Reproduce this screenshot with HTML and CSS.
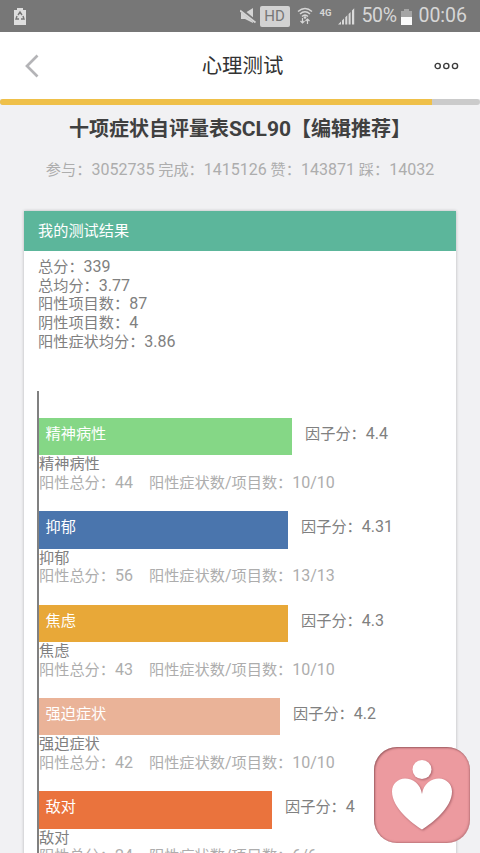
FILE: index.html
```html
<!DOCTYPE html>
<html lang="zh-CN">
<head>
<meta charset="utf-8">
<title>心理测试</title>
<link rel="stylesheet" href="styles.css">
</head>
<body>
<div class="status">
  <svg class="recycle" width="12" height="17" viewBox="0 0 12 17"><path d="M0 2h3V0h6v2h3v15H0z" fill="#dedede"/><path d="M4 7l2-3 2 3M9 8l1 3H7M5 11H2l1-3" fill="none" stroke="#777" stroke-width="1.4"/></svg>
  <svg class="mute" width="17" height="17" viewBox="0 0 17 17"><path d="M1 5h4l8-5v15l-8-4H1z" fill="#d4d4d4"/><path d="M0 1l16 13" stroke="#777" stroke-width="3.5"/><path d="M0 2.5l15.500 12" stroke="#d4d4d4" stroke-width="1.8"/></svg>
  <span class="hd">HD</span>
  <svg class="wifi" width="16" height="18" viewBox="0 0 16 18"><g fill="none" stroke="#d6d6d6" stroke-width="1.5"><path d="M1 4.500Q8-1.500 15 4.500M3 7Q8 2.500 13 7M5 9.500Q8 6.800 11 9.500"/></g><circle cx="8" cy="10.500" r="1.300" fill="#d6d6d6"/><path d="M5.500 11v5M3.500 14l2 2 2-2M10.500 17v-5M8.500 14l2-2 2 2" fill="none" stroke="#d6d6d6" stroke-width="1.200"/></svg>
  <span class="net">4G</span>
  <svg class="signal" width="17" height="17" viewBox="0 0 17 17"><path d="M0 16.500l3-3v3zM4 12.500l2-2v6H4zM7.300 9.200l2-2v9.300h-2zM10.600 5.900l2-2v12.600h-2zM14 2.500l2.200-2.200v16.200H14z" fill="#dadada"/></svg>
  <span class="pct">50%</span>
  <svg class="battery" width="11" height="16" viewBox="0 0 11 16"><path d="M0 2h3V0h5v2h3v6H0z" fill="#a5a5a5"/><path d="M0 8h11v8H0z" fill="#fafafa"/></svg>
  <span class="clock">00:06</span>
</div>
<header class="nav">
  <svg width="14" height="24" viewBox="0 0 14 24"><path d="M12.500 1.500L2 12l10.500 10.500" fill="none" stroke="#b4b4b7" stroke-width="2.700"/></svg>
  <h1>心理测试</h1>
  <svg width="25" height="8" viewBox="0 0 25 8"><g fill="none" stroke="#3c3c3c" stroke-width="1.400"><circle cx="3.700" cy="4" r="2.600"/><circle cx="12.300" cy="4" r="2.600"/><circle cx="21" cy="4" r="2.600"/></g></svg>
</header>
<div class="progress"><div class="done"></div></div>
<main>
  <h2>十项症状自评量表<span class="en">SCL90</span>【编辑推荐】</h2>
  <p class="stats">参与<i>：</i><b>3052735</b> 完成<i>：</i><b>1415126</b> 赞<i>：</i><b>143871</b> 踩<i>：</i><b>14032</b></p>
  <section class="card">
    <h3>我的测试结果</h3>
    <div class="summary">
      <p>总分<i>：</i><b>339</b></p>
      <p>总均分<i>：</i><b>3.77</b></p>
      <p>阳性项目数<i>：</i><b>87</b></p>
      <p>阴性项目数<i>：</i><b>4</b></p>
      <p>阳性症状均分<i>：</i><b>3.86</b></p>
    </div>
    <div class="chart">
      <div class="item">
        <div class="row"><div class="bar green" style="width:253px">精神病性</div><span>因子分<i>：</i><b>4.4</b></span></div>
        <p>精神病性</p>
        <p class="detail"><span>阳性总分<i>：</i><b>44</b></span><span>阳性症状数<b>/</b>项目数<i>：</i><b>10/10</b></span></p>
      </div>
      <div class="item">
        <div class="row"><div class="bar blue" style="width:249px">抑郁</div><span>因子分<i>：</i><b>4.31</b></span></div>
        <p>抑郁</p>
        <p class="detail"><span>阳性总分<i>：</i><b>56</b></span><span>阳性症状数<b>/</b>项目数<i>：</i><b>13/13</b></span></p>
      </div>
      <div class="item">
        <div class="row"><div class="bar amber" style="width:249px">焦虑</div><span>因子分<i>：</i><b>4.3</b></span></div>
        <p>焦虑</p>
        <p class="detail"><span>阳性总分<i>：</i><b>43</b></span><span>阳性症状数<b>/</b>项目数<i>：</i><b>10/10</b></span></p>
      </div>
      <div class="item">
        <div class="row"><div class="bar peach" style="width:241px">强迫症状</div><span>因子分<i>：</i><b>4.2</b></span></div>
        <p>强迫症状</p>
        <p class="detail"><span>阳性总分<i>：</i><b>42</b></span><span>阳性症状数<b>/</b>项目数<i>：</i><b>10/10</b></span></p>
      </div>
      <div class="item">
        <div class="row"><div class="bar orange" style="width:233px">敌对</div><span>因子分<i>：</i><b>4</b></span></div>
        <p>敌对</p>
        <p class="detail"><span>阳性总分<i>：</i><b>24</b></span><span>阳性症状数<b>/</b>项目数<i>：</i><b>6/6</b></span></p>
      </div>
    </div>
  </section>
</main>
<div class="float">
  <svg width="96" height="96" viewBox="0 0 96 96"><g fill="#fff"><circle cx="48" cy="22.500" r="9.500"/><path d="M48 82.500C38 76 18 61 18 44.500C18 37 24 31.500 31 31.500C39 31.500 46.500 37 48 47C49.500 37 57 31.500 65 31.500C72 31.500 78 37 78 44.500C78 61 58 76 48 82.500Z"/></g></svg>
</div>
</body>
</html>
```
FILE: styles.css
```css
* { box-sizing: border-box; margin: 0; padding: 0; }
body {
  height: 853px;
  overflow: hidden;
  display: flex;
  flex-direction: column;
  background: #f1f1f3;
  color: #808080;
  font: 15.2px/18.67px Roboto, "Noto Sans CJK SC", sans-serif;
}
b { font-size: 1.055em; font-weight: 400; line-height: 1; }
i { font-family: "Noto Sans CJK TC", sans-serif; font-style: normal; line-height: 1; }
svg { display: block; flex: none; }

.status {
  flex: none;
  height: 32px;
  display: flex;
  align-items: center;
  padding: 0 13px 0 14px;
  background: #777;
  color: #d6d6d6;
}
.mute { margin-left: auto; }
.hd {
  width: 30px;
  height: 21px;
  margin-left: 3px;
  border-radius: 2px;
  background: #d2d2d2;
  color: #777;
  font-size: 15px;
  line-height: 21px;
  text-align: center;
}
.wifi { margin-left: 7px; }
.net { margin: -6px 0 0 7px; font-size: 9.5px; font-weight: 700; }
.signal { margin-left: 7px; }
.pct { width: 37px; margin-left: 6px; font-size: 19.5px; letter-spacing: -.3px; }
.battery { margin: 2px 0 0 3px; }
.clock { margin-left: 6px; font-size: 19.5px; }

.nav {
  flex: none;
  height: 67px;
  display: flex;
  align-items: center;
  justify-content: space-between;
  padding: 0 21px 0 25px;
  background: #fff;
}
.nav h1 { margin-left: 12px; color: #333; font-size: 20.4px; font-weight: 400; line-height: 30px; }

.progress { flex: none; height: 6px; border-radius: 3px; background: #cbcbcb; overflow: hidden; }
.done { width: 90%; height: 100%; background: #efc049; }

main { flex: 1; min-height: 0; padding: 9px 24px 0; }
h2 { color: #404040; font-size: 20px; font-weight: 700; line-height: 30px; text-align: center; white-space: nowrap; }
.en { font-size: 21px; line-height: 1; }
.stats { margin-top: 16px; line-height: 20px; color: #adadad; text-align: center; white-space: nowrap; }
.card { height: 670px; margin-top: 31px; background: #fff; box-shadow: 0 0 3px rgba(0, 0, 0, .25); }
h3 { height: 40px; padding-left: 14px; background: #5cb69b; color: #fff; font-size: 15.2px; font-weight: 400; line-height: 40px; }
.summary { padding: 7px 14px 40px; }
.chart { margin-left: 13px; padding-top: 26.5px; border-left: 2px solid #808080; }
.item { height: 93.33px; white-space: nowrap; }
.row { display: flex; gap: 13px; height: 37.33px; line-height: 32px; }
.bar { height: 37.33px; padding-left: 6.5px; color: #fff; }
.green { background: #85d786; }
.blue { background: #4a75ad; }
.amber { background: #e8a838; }
.peach { background: #eab398; }
.orange { background: #ea733d; }
.detail { display: flex; gap: 16px; color: #adadad; }

.float {
  position: fixed;
  left: 374px;
  top: 747px;
  width: 96px;
  height: 96px;
  border-radius: 23px;
  background: #ec9a9f;
  box-shadow: inset 1px 1px 2px rgba(100, 50, 55, .6), inset -1px -1px 2px rgba(100, 50, 55, .3);
}
.float svg { filter: drop-shadow(1px 1px 1px rgba(110, 50, 60, .5)); }
```
